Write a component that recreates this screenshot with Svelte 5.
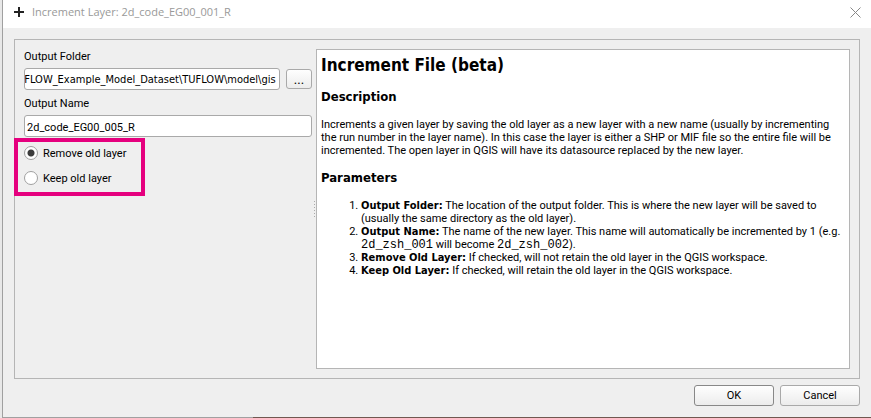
<script>
  let folder = $state('TUFLOW_Example_Model_Dataset\\TUFLOW\\model\\gis');
  let name = $state('2d_code_EG00_005_R');
  let mode = $state('remove');
  let folderInput;

  // Keep the end of a long path in view.
  $effect(() => {
    folderInput.scrollLeft = folderInput.scrollWidth;
  });
</script>

<div class="window">
  <header>
    <svg class="plus" viewBox="0 0 12 12" aria-hidden="true"><path d="M6 1v10M1 6h10" /></svg>
    <span class="title">Increment Layer: 2d_code_EG00_001_R</span>
    <button class="close" aria-label="Close">
      <svg viewBox="0 0 11 11" aria-hidden="true"><path d="M.5 .5l10 10M10.5 .5l-10 10" /></svg>
    </button>
  </header>

  <main>
    <div class="group">
      <form class="fields">
        <label for="folder">Output Folder</label>
        <div class="row">
          <input id="folder" class="text path" type="text" bind:this={folderInput} bind:value={folder} />
          <button type="button" class="browse" aria-label="Browse">...</button>
        </div>
        <label for="name">Output Name</label>
        <input id="name" class="text" type="text" bind:value={name} />
        <div class="choices">
          <label class="choice"><input type="radio" name="mode" value="remove" bind:group={mode} />Remove old layer</label>
          <label class="choice"><input type="radio" name="mode" value="keep" bind:group={mode} />Keep old layer</label>
        </div>
      </form>

      <div class="handle"><i></i></div>

      <article>
        <h1>Increment File (beta)</h1>
        <h2>Description</h2>
        <p>Increments a given layer by saving the old layer as a new layer with a new name (usually by incrementing the run number in the layer name). In this case the layer is either a SHP or MIF file so the entire file will be incremented. The open layer in QGIS will have its datasource replaced by the new layer.</p>
        <h2>Parameters</h2>
        <ol>
          <li><b>Output Folder:</b> The location of the output folder. This is where the new layer will be saved to (usually the same directory as the old layer).</li>
          <li><b>Output Name:</b> The name of the new layer. This name will automatically be incremented by 1 (e.g. <code>2d_zsh_001</code> will become <code>2d_zsh_002</code>).</li>
          <li><b>Remove Old Layer:</b> If checked, will not retain the old layer in the QGIS workspace.</li>
          <li><b>Keep Old Layer:</b> If checked, will retain the old layer in the QGIS workspace.</li>
        </ol>
      </article>
    </div>

    <footer>
      <button class="action default">OK</button>
      <button class="action">Cancel</button>
    </footer>
  </main>
  <div class="edge"></div>
</div>

<style>
  :global(body) { background: #e8e8e8; }
  .window {
    box-sizing: border-box;
    min-height: 100vh;
    margin-left: 2px;
    border-left: 1px solid #a0a0a0;
    display: flex;
    flex-direction: column;
    background: #efefef;
    color: #000;
    font: 11px/13px Roboto, sans-serif;
  }
  header {
    height: 28px;
    box-sizing: border-box;
    padding: 0 10px 4px;
    display: flex;
    align-items: center;
    background: #fff;
    color: #999;
    font: 11px/16px "Open Sans", sans-serif;
  }
  .plus { width: 12px; height: 12px; stroke: #222; stroke-width: 2; fill: none; }
  .title { flex: 1; margin-left: 7px; }
  .close { border: 0; padding: 0; background: none; display: flex; }
  .close svg { width: 11px; height: 11px; stroke: #888; fill: none; }
  main {
    flex: 1;
    display: flex;
    flex-direction: column;
    padding: 11px;
    gap: 6px;
  }
  .group {
    flex: 1;
    display: flex;
    border: 1px solid #b5b5b5;
    padding: 9px;
  }
  .fields { width: 288px; flex: none; display: flex; flex-direction: column; }
  .fields > label { line-height: 15px; }
  .row { display: flex; align-items: center; gap: 6px; margin: 4px 0 6px; }
  .text {
    box-sizing: border-box;
    width: 100%;
    height: 22px;
    border: 1px solid #a9a9a9;
    border-radius: 3px;
    padding: 2px 2px 0;
    background: #fff;
    color: #000;
    font: inherit;
    outline: 0;
  }
  .row + label + .text { margin-top: 4px; }
  .path {
    flex: 1;
    min-width: 0;
    padding: 1px 3px 0 0;
    font-family: "DejaVu Sans Condensed", "DejaVu Sans", sans-serif;
    font-stretch: condensed;
  }
  .browse, .action {
    box-sizing: border-box;
    padding: 0;
    border: 1px solid #a9a9a9;
    border-radius: 3px;
    background: linear-gradient(#fefefe, #ececec);
    color: #000;
    font: inherit;
  }
  .browse { width: 26px; height: 20px; font-size: 13px; }
  .choices {
    width: 131px;
    box-sizing: border-box;
    margin: 1px 0 0 -10px;
    border: 4px solid #e5007e;
    padding: 0 6px 1px;
    display: flex;
    flex-direction: column;
    gap: 1px;
  }
  .choice { height: 24px; padding-bottom: 2px; box-sizing: border-box; display: flex; align-items: center; gap: 5px; white-space: nowrap; }
  .choice input {
    appearance: none;
    width: 14px;
    height: 14px;
    box-sizing: border-box;
    margin: 0;
    border: 1px solid #a0a0a0;
    border-radius: 50%;
    background: #fff;
  }
  .choice input:checked { background: radial-gradient(circle, #3c3c3c 3px, #fff 4px); }
  .handle { width: 4px; flex: none; display: flex; align-items: center; justify-content: center; }
  .handle i { width: 1px; height: 17px; background: repeating-linear-gradient(#aaa 0 1px, transparent 1px 3px); }
  article {
    flex: 1;
    min-width: 0;
    border: 1px solid #b5b5b5;
    background: #fff;
    padding: 4px 6px 80px 4px;
  }
  h1, h2, b { font-family: "DejaVu Sans Condensed", "DejaVu Sans", sans-serif; font-stretch: condensed; }
  h1, h2, p, ol { margin: 0; }
  h1 { font-size: 17px; line-height: 22px; }
  h2 { font-size: 13px; line-height: 16px; margin: 13px 0; }
  ol { padding-left: 40px; }
  b { line-height: 12px; }
  code { font: 12px/12px "Liberation Mono", monospace; }
  footer { display: flex; justify-content: flex-end; gap: 6px; }
  .action { width: 80px; height: 21px; }
  .default { border-color: #888; }
  .edge { height: 1px; background: linear-gradient(90deg, #a0a0a0 250px, #705850 250px); }
</style>
